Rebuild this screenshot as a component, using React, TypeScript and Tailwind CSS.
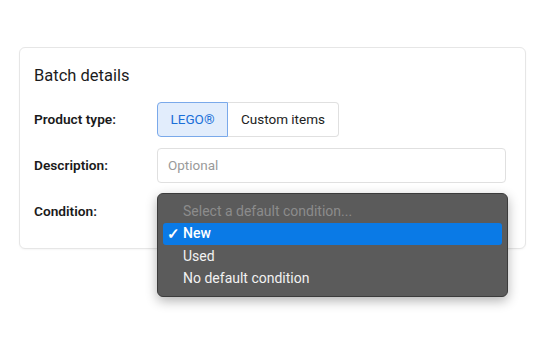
import React from 'react';

const conditions = ['New', 'Used', 'No default condition'];

export default function App() {
  return (
    <div className="min-h-[339px] w-[550px] bg-white pt-[47px] pl-[19px] font-['Roboto',sans-serif]">
      <div className="w-[507px] rounded-[6px] border border-[#e6e6e6] bg-white px-[14px] pt-[16px] pb-[19px] shadow-[0_1px_2px_rgba(0,0,0,0.04)]">
        <h2 className="h-[24px] text-[16.5px] leading-[24px] text-[#1c1c1c]">Batch details</h2>
        <div className="mt-[14px] flex flex-col gap-[11px]">
          <div className="flex items-center">
            <span className="w-[123px] text-[13.7px] font-semibold text-[#1a1a1a]">Product type:</span>
            <div className="flex h-[35px] text-[13.5px]">
              <button className="h-full w-[71px] rounded-l-[4px] border border-[#7aa9ea] bg-[#e2edfc] text-[#1a6fd8]">LEGO®</button>
              <button className="h-full w-[111px] rounded-r-[4px] border border-l-0 border-[#e0e0e0] bg-white text-[#222]">Custom items</button>
            </div>
          </div>
          <div className="flex items-center">
            <span className="w-[123px] text-[13.7px] font-semibold text-[#1a1a1a]">Description:</span>
            <div className="flex h-[35px] w-[349px] items-center rounded-[4px] border border-[#e0e0e0] px-[10px] text-[13.5px] text-[#9a9a9a]">Optional</div>
          </div>
          <div className="relative flex h-[35px] items-center">
            <span className="w-[123px] text-[13.7px] font-semibold text-[#1a1a1a]">Condition:</span>
            <div className="h-[35px] w-[349px]" />
            <div className="absolute top-[-1px] left-[123px] w-[351px] rounded-[6px] border border-[#3c3c3c] bg-[#5b5b5b] px-[5px] py-[6px] text-[14px] shadow-[0_4px_12px_rgba(0,0,0,0.3)]">
              <div className="flex h-[22.5px] items-center pl-[20px] text-[#8c8c8c]">Select a default condition...</div>
              {conditions.map((c, i) => (
                <div
                  key={c}
                  className={`relative flex h-[22.5px] items-center rounded-[3px] pl-[20px] text-[#f2f2f2] ${i === 0 ? 'bg-[#0a7ae6] font-medium text-white' : ''}`}
                >
                  {i === 0 && <span className="absolute left-[4px] text-[15px] font-bold">✓</span>}
                  {c}
                </div>
              ))}
            </div>
          </div>
        </div>
      </div>
    </div>
  );
}
